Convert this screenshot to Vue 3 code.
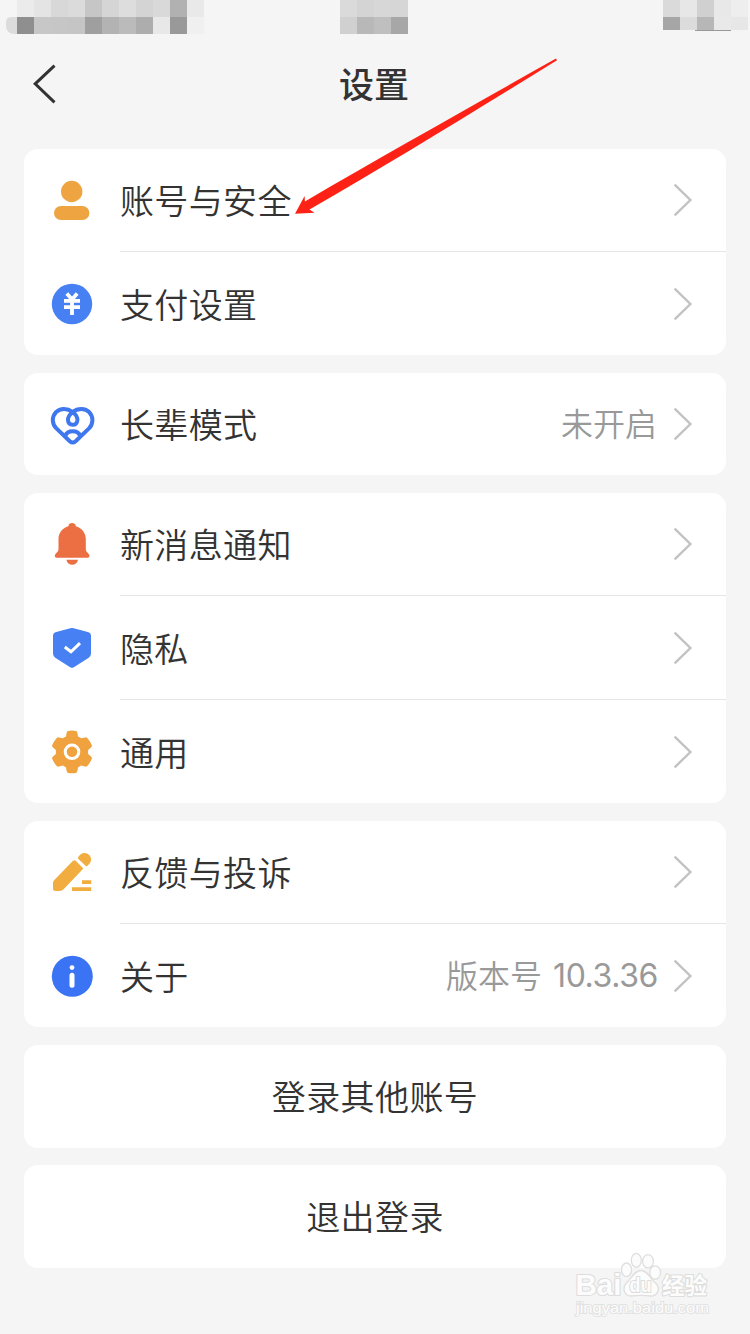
<script setup>
const mosaics = [
  {
    name: 'left',
    rows: [
      ['#f5f5f5', '#ebebeb', '#e4e4e4', '#d8d8d8', '#dbdbdb', '#c6c6c6', '#d5d5d5', '#dddddd', '#d4d4d4', '#d9d9d9', '#b1b1b1', '#e9e9e9'],
      ['#dcdcdc', '#8f8f8f', '#c7c7c7', '#c6c6c6', '#c5c5c5', '#9f9f9f', '#b3b3b3', '#bbbbbb', '#adadad', '#e8e8e8', '#999999', '#f0f0f0'],
    ],
  },
  {
    name: 'center',
    rows: [
      ['#dadada', '#d4d4d4', '#d7d7d7', '#d6d6d6'],
      ['#d0d0d0', '#b8b8b8', '#bfbfbf', '#a7a7a7'],
    ],
  },
  {
    name: 'right',
    rows: [
      ['#dadada', '#e7e7e7', '#d0d0d0', '#e8e8e8', '#eeeeee'],
      ['#a6a6a6', '#dcdcdc', '#b7b7b7', '#e9e9e9', '#e7e7e7'],
    ],
  },
]

const groups = [
  [
    { icon: 'user', label: '账号与安全' },
    { icon: 'pay', label: '支付设置' },
  ],
  [{ icon: 'heart', label: '长辈模式', value: '未开启' }],
  [
    { icon: 'bell', label: '新消息通知' },
    { icon: 'shield', label: '隐私' },
    { icon: 'gear', label: '通用' },
  ],
  [
    { icon: 'pen', label: '反馈与投诉' },
    { icon: 'info', label: '关于', value: '版本号', version: '10.3.36' },
  ],
]

const actions = ['登录其他账号', '退出登录']
</script>

<template>
  <div class="page">
    <div class="status">
      <div v-for="m in mosaics" :key="m.name" class="mosaic" :class="m.name">
        <div v-for="(row, r) in m.rows" :key="r" class="mosaic-row">
          <span v-for="(c, i) in row" :key="i" :style="{ background: c }"></span>
        </div>
      </div>
    </div>

    <header class="nav">
      <svg class="back" width="26" height="42" viewBox="0 0 26 42">
        <path d="M22.5 2.7 3.2 20.8 22.5 39.4" fill="none" stroke="#333" stroke-width="3" />
      </svg>
      <h1>设置</h1>
    </header>

    <main class="list">
      <section v-for="(group, g) in groups" :key="g" class="card">
        <div v-for="item in group" :key="item.label" class="row">
          <svg class="icon" viewBox="0 0 48 48" width="48" height="48">
            <g v-if="item.icon === 'user'" fill="#eea440">
              <circle cx="23.7" cy="15.5" r="10.7" />
              <rect x="6" y="30" width="35.4" height="14" rx="7" />
            </g>
            <g v-else-if="item.icon === 'pay'">
              <circle cx="24" cy="24" r="20.2" fill="#4680f2" />
              <path d="M18.8 13.4 24 19.4 29.2 13.4M16 20.8h16M16 27.2h16M24 19v16" fill="none" stroke="#fff" stroke-width="3.8" />
            </g>
            <g v-else-if="item.icon === 'heart'" fill="none" stroke="#3f78ee" stroke-width="4" stroke-linejoin="round">
              <path d="M24.7 12C30 7.8 37.5 8.2 41.2 12.2C45.6 17 45.4 23.8 41 28.4L27.6 41.2Q24.7 43.8 21.8 41.2L8.4 28.4C3.8 23.8 3.6 17 8 12.2C12 8.2 19 7.8 24.7 12C28 14.6 29.6 17.4 29.4 20.2C29 23.2 27.2 24.8 24.7 24.8C22.2 24.8 20.2 23.2 20 20.2C19.8 17.4 21.4 14.6 24.7 12Z" />
              <path d="M17.2 36C19.5 29.8 29.9 29.8 32.2 36" />
            </g>
            <g v-else-if="item.icon === 'bell'" fill="#ec6e43">
              <path d="M20.4 6.2C20.6 1.8 27.6 1.8 27.8 6.2C34 8 37.8 13 37.8 19.2V29C37.8 32.5 41.5 33.3 41.5 35.8C41.5 37 40.7 37.7 39.5 37.7H8.8C7.6 37.7 6.8 37 6.8 35.8C6.8 33.3 10.5 32.5 10.5 29V19.2C10.5 13 14.2 8 20.4 6.2Z" />
              <path d="M18.4 39.8H30C29 46.5 19.4 46.5 18.4 39.8Z" />
            </g>
            <g v-else-if="item.icon === 'shield'">
              <path d="M22.3 4.3Q24 3.7 25.7 4.3L40.6 8.3Q43 9 43 11.5V29Q43 32.5 40 34.2L25.8 43.2Q24 44.4 22.2 43.2L8 34.2Q5 32.5 5 29V11.5Q5 9 7.4 8.3Z" fill="#4680f2" />
              <path d="M16.8 23 23 27.8 32 19.2" fill="none" stroke="#fff" stroke-width="3" />
            </g>
            <g v-else-if="item.icon === 'gear'">
              <path d="M20 3Q24 2.2 28 3Q29 3.2 29.3 4.6L30 8.4Q31.5 9 33.2 10.3L37 9.4Q38.5 9 39.3 10Q42.3 13.4 43.8 17.3Q44.2 18.5 43 19.4L40.1 22V26L43 28.6Q44.2 29.6 43.8 30.7Q42.3 34.7 39.3 38Q38.5 39 37 38.6L33.2 37.5Q31.5 38.8 30 39.4L29.3 43.3Q29 44.7 28 44.9Q24 45.6 20 44.9Q19 44.7 18.7 43.3L18 39.4Q16.5 38.8 14.8 37.5L11 38.6Q9.5 39 8.7 38Q5.7 34.7 4.2 30.7Q3.8 29.6 5 28.6L7.9 26V22L5 19.4Q3.8 18.5 4.2 17.3Q5.7 13.4 8.7 10Q9.5 9 11 9.4L14.8 10.3Q16.5 9 18 8.4L18.7 4.6Q19 3.2 20 3Z" fill="#f0a23f" />
              <circle cx="24" cy="23.8" r="6.8" fill="none" stroke="#fff" stroke-width="3" />
            </g>
            <g v-else-if="item.icon === 'pen'" fill="#f1ad40">
              <path d="M27.7 12.8 35.4 20.5 15.6 41.2Q14 43 11.5 43H7.2Q5 43 5 40.8V35Q5 33.2 6.3 31.9L25 12.8Q26.3 11.6 27.7 12.8Z" />
              <path d="M30 9.6C32 5.6 36.2 3.6 40 6.1C44.5 9.1 44 14.5 39.2 18Q38.2 18.6 37.3 17.6L30.4 11Q29.6 10.3 30 9.6Z" />
              <path d="M34 32.2h9.2v3.9h-9.2zM24 39.2h19.2V43H24z" />
            </g>
            <g v-else>
              <circle cx="24.3" cy="24.3" r="20.5" fill="#3a74f4" />
              <circle cx="24" cy="15.6" r="2.4" fill="#fff" />
              <rect x="21.5" y="20.8" width="5" height="15" rx="2.5" fill="#fff" />
            </g>
          </svg>
          <span class="label">{{ item.label }}</span>
          <span v-if="item.value" class="value">{{ item.value }}</span>
          <span v-if="item.version" class="value version">{{ item.version }}</span>
          <svg class="chevron" width="22" height="36" viewBox="0 0 22 36">
            <path d="M2.6 2.6 18.4 18 2.6 33.4" fill="none" stroke="#c2c2c2" stroke-width="2.4" />
          </svg>
        </div>
      </section>
      <button v-for="a in actions" :key="a" class="card action">{{ a }}</button>
    </main>

    <svg class="arrow" width="270" height="162" viewBox="290 55 270 162">
      <path d="M556 58.6 557 60.2C470 114 390 163 309.5 209.6L314.5 212.8 295 213.7 304.6 196 304.9 201.4C390 152 470 107 556 58.6Z" fill="#fe2216" />
    </svg>

    <svg class="watermark" width="144" height="72" viewBox="570 1248 144 72">
      <g fill="#fcfcfc" stroke="#dfdfdf" stroke-width="1.3">
        <ellipse cx="626.5" cy="1269.8" rx="5" ry="6.8" />
        <ellipse cx="636.3" cy="1260.3" rx="5" ry="7" />
        <ellipse cx="648" cy="1261.3" rx="5.4" ry="6.6" />
        <ellipse cx="655.2" cy="1272.6" rx="5.4" ry="6.8" />
        <path d="M641 1270.5C648 1270.5 650 1279 656 1283.5C661 1288 657.5 1296 651 1296Q641 1294.6 631 1296C624.5 1296 622 1288.5 626 1283.5C631 1279 634 1270.5 641 1270.5Z" />
      </g>
      <g class="brand">
        <text x="575.5" y="1294.5" font-size="29" textLength="46" lengthAdjust="spacingAndGlyphs">Bai</text>
        <text x="629.5" y="1292" font-size="20" textLength="22" lengthAdjust="spacingAndGlyphs">du</text>
        <text x="662" y="1293.5" font-size="23" textLength="45" lengthAdjust="spacingAndGlyphs">经验</text>
      </g>
      <text class="url" x="576" y="1312.5" font-size="15" textLength="133" lengthAdjust="spacingAndGlyphs">jingyan.baidu.com</text>
    </svg>
  </div>
</template>

<style>
html,
body {
  background: #f5f5f5;
}
</style>

<style scoped>
.page {
  position: relative;
  box-sizing: border-box;
  width: 750px;
  height: 1334px;
  overflow: hidden;
  background: #f5f5f5;
  color: #333;
  font-family: "Noto Sans CJK SC", sans-serif;
}
.status {
  display: grid;
  grid-template-columns: 340px 323px 87px;
  height: 34px;
}
.mosaic-row {
  display: flex;
  height: 17px;
}
.mosaic-row span {
  width: 17px;
}
.left .mosaic-row + .mosaic-row span:first-child {
  width: 11px;
  margin-left: 6px;
  border-radius: 5px 0 0 8px;
}
.right .mosaic-row + .mosaic-row {
  height: 13px;
}
.right::after {
  content: "";
  display: block;
  width: 36px;
  height: 1px;
  margin-left: 32px;
  background: #999;
}
.nav {
  display: grid;
  grid-template-columns: 60px 1fr 60px;
  align-items: center;
  height: 100px;
  margin-bottom: 15px;
}
.back {
  margin-left: 32px;
}
h1 {
  margin: 0;
  padding: 0 2px 2px 0;
  font-size: 35px;
  line-height: 50px;
  font-weight: 500;
  text-align: center;
}
.list {
  display: flex;
  flex-direction: column;
  gap: 18px;
  padding: 0 24px;
}
.card {
  border-radius: 14px;
  background: #fff;
}
.row {
  display: flex;
  align-items: center;
  height: 102px;
  padding: 0 32px 0 24px;
}
.row + .row {
  position: relative;
  margin-top: 2px;
}
.row + .row::before {
  content: "";
  position: absolute;
  top: -2px;
  left: 96px;
  right: 0;
  height: 1px;
  background: #e6e6e6;
}
.icon {
  flex: none;
  margin-right: 24px;
}
.label {
  flex: 1;
  font-size: 34px;
  font-weight: 350;
  letter-spacing: 0.35px;
  line-height: 50px;
}
.value {
  margin-right: 15px;
  padding-bottom: 4px;
  font-size: 32px;
  font-weight: 350;
  line-height: 48px;
  color: #999;
}
.value:has(+ .version) {
  margin-right: 11px;
}
.version {
  margin-right: 14px;
  padding-bottom: 0;
  font-family: Inter, sans-serif;
  font-weight: 400;
  letter-spacing: -0.4px;
}
.action {
  height: 103px;
  padding: 0 0 2px;
  border: 0;
  color: #333;
  font-family: inherit;
  font-size: 34px;
  font-weight: 350;
  letter-spacing: 0.4px;
}
.action + .action {
  margin-top: -1px;
}
.arrow {
  position: absolute;
  left: 290px;
  top: 55px;
}
.watermark {
  position: absolute;
  left: 570px;
  top: 1248px;
}
.brand {
  fill: #fcfcfc;
  stroke: #dddddd;
  stroke-width: 2.2px;
  stroke-linejoin: round;
  paint-order: stroke;
  font-family: "Liberation Sans", "Noto Sans CJK SC", sans-serif;
  font-weight: 700;
}
.url {
  fill: #fcfcfc;
  stroke: #e2e2e2;
  stroke-width: 1.8px;
  paint-order: stroke;
  font-family: "Liberation Sans", sans-serif;
}
</style>
